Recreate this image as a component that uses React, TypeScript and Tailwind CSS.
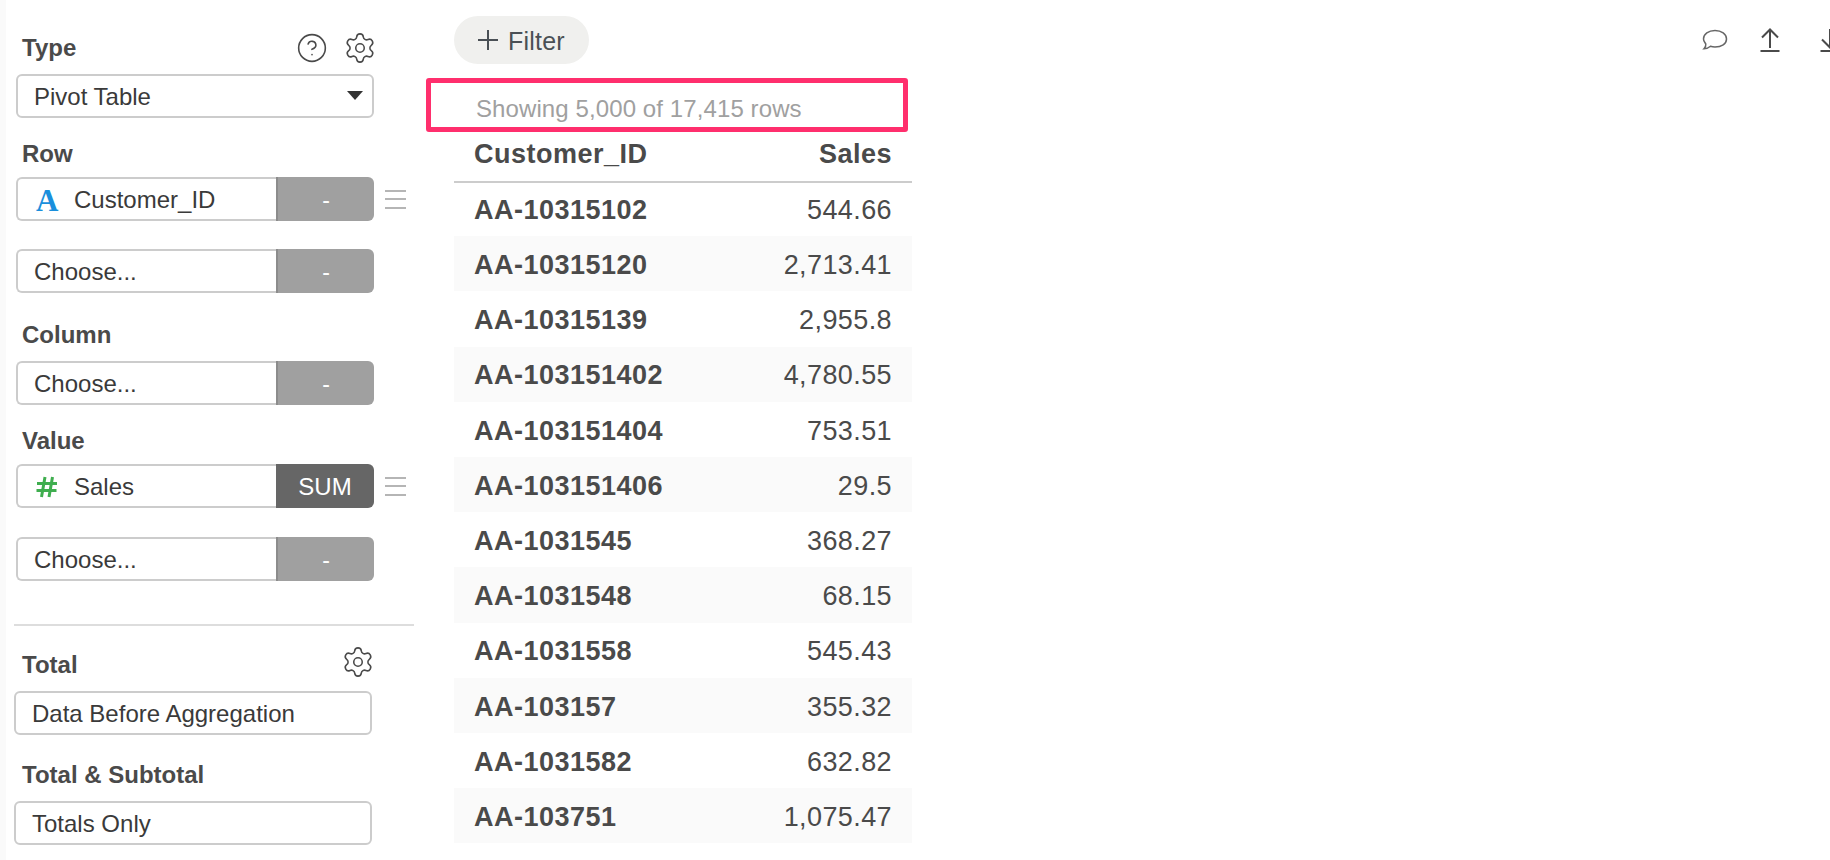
import { CircleHelp, Settings } from "lucide-react";
import type { ReactNode } from "react";

const rows = [
  ["AA-10315102", "544.66"],
  ["AA-10315120", "2,713.41"],
  ["AA-10315139", "2,955.8"],
  ["AA-103151402", "4,780.55"],
  ["AA-103151404", "753.51"],
  ["AA-103151406", "29.5"],
  ["AA-1031545", "368.27"],
  ["AA-1031548", "68.15"],
  ["AA-1031558", "545.43"],
  ["AA-103157", "355.32"],
  ["AA-1031582", "632.82"],
  ["AA-103751", "1,075.47"],
];

function Label({ children, className }: { children: ReactNode; className: string }) {
  return (
    <div className={`flex h-11 items-center pl-[6px] text-[24px] font-bold text-[#4a4a4a] ${className}`}>
      {children}
    </div>
  );
}

function Hamburger() {
  return (
    <div className="flex h-[19px] w-[21px] flex-col justify-between">
      <div className="h-[2px] bg-[#b5b5b5]" />
      <div className="h-[2px] bg-[#b5b5b5]" />
      <div className="h-[2px] bg-[#b5b5b5]" />
    </div>
  );
}

function HashIcon() {
  return (
    <svg width="22" height="22" viewBox="0 0 22 22" fill="none" stroke="#3fae4f" strokeWidth="3">
      <path d="M9 1 5.500 21M16.500 1 13 21M1 7.500h20M0.500 14.500h20" />
    </svg>
  );
}

function FieldRow({
  icon,
  text,
  agg = "-",
  active = false,
  handle = false,
  className,
}: {
  icon?: ReactNode;
  text: string;
  agg?: string;
  active?: boolean;
  handle?: boolean;
  className: string;
}) {
  return (
    <div className={`flex items-center gap-[11px] ${className}`}>
      <div className="flex h-11 w-[358px]">
        <div
          className={`flex min-w-0 flex-1 items-center rounded-l-[6px] border-2 border-r-0 border-[#cccccc] bg-white pt-[2px] text-[24px] text-[#3a3a3a] ${
            icon ? "pl-[18px]" : "pl-[16px]"
          }`}
        >
          {icon ? <span className="flex w-[38px] shrink-0 items-center">{icon}</span> : null}
          {text}
        </div>
        <div
          className={`flex w-[98px] items-center justify-center rounded-r-[6px] pt-[2px] text-white ${
            active ? "bg-[#666666] text-[24px]" : "border-l-2 border-[#8c8c8c] bg-[#a0a0a0] text-[23px]"
          }`}
        >
          {agg}
        </div>
      </div>
      {handle ? <Hamburger /> : null}
    </div>
  );
}

function Select({ text, className, caret = false }: { text: string; className: string; caret?: boolean }) {
  return (
    <div
      className={`flex h-11 w-[358px] items-center justify-between rounded-[6px] border-2 border-[#cccccc] bg-white pl-[16px] pr-[9px] pt-[2px] text-[24px] text-[#3a3a3a] ${className}`}
    >
      {text}
      {caret ? (
        <svg width="16" height="9" viewBox="0 0 16 9" className="mb-[4px]">
          <path d="M0 0h16L8 9z" fill="#333333" />
        </svg>
      ) : null}
    </div>
  );
}

function Sidebar() {
  return (
    <aside className="relative h-full w-[448px] shrink-0 border-l-[6px] border-[#fafafa] pl-[10px] pt-[26px]">
      <div className="flex w-[358px] items-center justify-between">
        <Label className="">Type</Label>
        <div className="-mr-[3px] flex items-center gap-[15px]">
          <CircleHelp size={32} strokeWidth={1.2} className="text-[#4a4a4a]" />
          <Settings size={34} strokeWidth={1.1} className="text-[#4a4a4a]" />
        </div>
      </div>
      <Select text="Pivot Table" caret className="mt-1" />

      <Label className="mt-[14px]">Row</Label>
      <FieldRow
        className="mt-px"
        text="Customer_ID"
        handle
        icon={<span className="font-['Liberation_Serif'] text-[31px] font-bold leading-none text-[#1a8fdc]">A</span>}
      />
      <FieldRow className="mt-[28px]" text="Choose..." />

      <Label className="mt-[20px]">Column</Label>
      <FieldRow className="mt-1" text="Choose..." />

      <Label className="mt-[14px]">Value</Label>
      <FieldRow className="mt-px" text="Sales" agg="SUM" active handle icon={<HashIcon />} />
      <FieldRow className="mt-[29px]" text="Choose..." />

      <div className="-ml-[2px] mt-[43px] h-[2px] w-[400px] bg-[#dddddd]" />

      <div className="-ml-[2px]">
        <div className="mt-[15px] flex w-[358px] items-center justify-between">
          <Label className="pl-[8px] pt-[4px]">Total</Label>
          <Settings size={34} strokeWidth={1.1} className="-mr-[3px] -mt-[2px] text-[#4a4a4a]" />
        </div>
        <Select text="Data Before Aggregation" className="mt-[6px]" />
        <Label className="mt-[18px] pl-[8px]">Total &amp; Subtotal</Label>
        <Select text="Totals Only" className="mt-1" />
      </div>
    </aside>
  );
}

function TopIcons() {
  return (
    <div className="absolute right-[-12px] top-[26px] flex items-center text-[#4a4a4a]">
      <svg width="26" height="26" viewBox="0 0 26 26" fill="none" stroke="#666666" strokeWidth="1.5">
        <path d="M13 4.500c6.500 0 11.500 3.500 11.500 8.500s-5 8-11.500 8c-1.500 0-3-.2-4.500-.7-1.500 1.300-4 2.500-6.500 2.500 1-1 2-3 1.800-4.800C3 16.500 1.500 15 1.500 13c0-5 5-8.500 11.500-8.500z" />
      </svg>
      <svg width="24" height="26" viewBox="0 0 24 26" fill="none" stroke="#4a4a4a" strokeWidth="2" className="ml-[30px]">
        <path d="M12 22V3.500M4 11.500l8-8 8 8M2.500 25h19" />
      </svg>
      <svg width="24" height="26" viewBox="0 0 24 26" fill="none" stroke="#4a4a4a" strokeWidth="2" className="ml-[36px]">
        <path d="M12 3v18.500M4 13.500l8 8 8-8M2.500 25h19" />
      </svg>
    </div>
  );
}

export default function App() {
  return (
    <div className="relative flex h-[860px] w-[1830px] overflow-hidden bg-white font-['Liberation_Sans',Arial,sans-serif]">
      <Sidebar />
      <main className="relative flex-1 pt-4">
        <div className="ml-[6px] flex h-12 w-[135px] items-center rounded-full bg-[#f0f0ee] pl-[24px] pt-[3px] text-[25px] tracking-[0.2px] text-[#4a5055]">
          <svg width="20" height="20" viewBox="0 0 20 20" fill="none" stroke="#4a5055" strokeWidth="2" className="mb-[3px] mr-[10px]">
            <path d="M10 0v20M0 10h20" />
          </svg>
          Filter
        </div>

        <div className="ml-[6px] w-[458px]">
          <div className="flex h-[68px] items-end pb-[11px] pl-[22px] text-[24px] leading-[24px] tracking-[0.1px] text-[#a0a0a0]">
            Showing 5,000 of 17,415 rows
          </div>
          <div className="-mb-[2px] flex h-[51px] items-center justify-between border-b-2 border-[#cccccc] px-5 pb-[5px] text-[27px] font-bold tracking-[0.5px] text-[#4a4a4a]">
            <span>Customer_ID</span>
            <span>Sales</span>
          </div>
          {rows.map(([id, sales], i) => (
            <div
              key={id}
              className={`flex h-[55.2px] items-center justify-between px-5 pt-[3px] text-[27px] tracking-[0.4px] text-[#4a4a4a] ${
                i % 2 === 1 ? "bg-[#fafafa]" : ""
              }`}
            >
              <span className="font-bold tracking-[0.5px]">{id}</span>
              <span>{sales}</span>
            </div>
          ))}
        </div>

        {/* annotation drawn over the row count */}
        <div className="absolute left-[-22px] top-[78px] h-[54px] w-[482px] rounded-[3px] border-[5px] border-[#ff2f6d]" />
        <TopIcons />
      </main>
    </div>
  );
}
